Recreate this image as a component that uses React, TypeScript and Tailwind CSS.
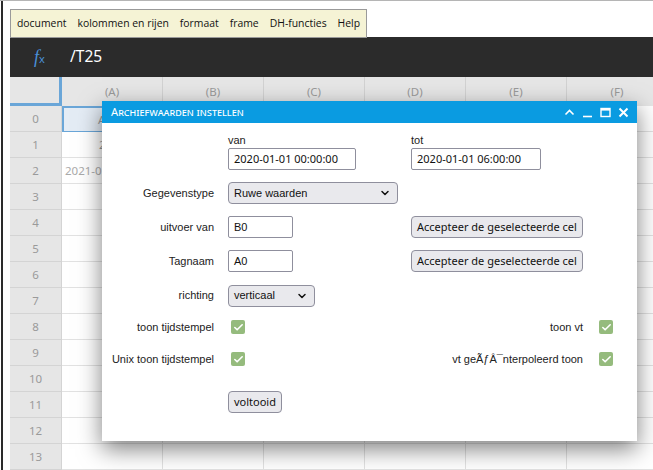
import { Check, ChevronDown } from "lucide-react";

const cols = ["(A)", "(B)", "(C)", "(D)", "(E)", "(F)"];
const rows = Array.from({ length: 14 }, (_, i) => i);
const menu = ["document", "kolommen en rijen", "formaat", "frame", "DH-functies", "Help"];

const sans = "font-['Liberation_Sans',Arial,sans-serif]";
const ui = "font-['Noto_Sans','Open_Sans',sans-serif]";
const open = "font-['Open_Sans','Noto_Sans',sans-serif]";

const Box = () => (
  <div className="w-[14px] h-[14px] rounded-[2px] bg-[#95bb7d] flex items-center justify-center">
    <Check className="w-[11px] h-[11px] text-white" strokeWidth={3.5} />
  </div>
);

const Input = ({ value, w }: { value: string; w: string }) => (
  <div className={`${w} h-[22px] border border-[#8f8f9d] rounded-[2px] bg-white flex items-center px-[5px] text-[11px] text-[#111]`}>
    {value}
  </div>
);

const Select = ({ value, w }: { value: string; w: string }) => (
  <div className={`${w} h-[22px] border border-[#8f8f9d] rounded-[4px] bg-[#e9e9ed] flex items-center justify-between pl-[5px] pr-[6px] text-[11px] text-[#111] ${sans}`}>
    <span>{value}</span>
    <ChevronDown className="w-[12px] h-[12px] text-[#111]" strokeWidth={3} />
  </div>
);

const Btn = ({ label }: { label: string }) => (
  <div className={`h-[22px] px-[5px] border border-[#8f8f9d] rounded-[4px] bg-[#e9e9ed] flex items-center text-[11px] text-[#111] ${ui}`}>
    {label}
  </div>
);

const Label = ({ text }: { text?: string }) => (
  <div className={`w-[126px] shrink-0 pr-[14px] text-right whitespace-nowrap text-[11px] text-[#222] ${sans}`}>{text}</div>
);

const Dialog = () => (
  <div className="absolute left-[102px] top-[100px] w-[535px] h-[340px] bg-white shadow-[0_8px_22px_rgba(0,0,0,0.5)] flex flex-col">
    <div className="h-[22px] bg-[#0a9be1] flex items-center justify-between pl-[9px] pr-[8px]">
      <span className={`text-white text-[11.2px] [font-variant:small-caps] ${ui}`}>Archiefwaarden instellen</span>
      <div className="flex items-center gap-[7px]">
        <svg width="11" height="11" viewBox="0 0 11 11"><path d="M1.5 7.5 L5.5 3.5 L9.5 7.5" stroke="white" strokeWidth="1.6" fill="none" /></svg>
        <svg width="11" height="11" viewBox="0 0 11 11"><path d="M1 9.5 H10" stroke="white" strokeWidth="1.6" /></svg>
        <svg width="11" height="11" viewBox="0 0 11 11"><rect x="1" y="1.5" width="9" height="8" stroke="white" strokeWidth="1.4" fill="none" /><path d="M1 2.5 H10" stroke="white" strokeWidth="2.2" /></svg>
        <svg width="11" height="11" viewBox="0 0 11 11"><path d="M1.5 1.5 L9.5 9.5 M9.5 1.5 L1.5 9.5" stroke="white" strokeWidth="2" /></svg>
      </div>
    </div>
    <div className="flex flex-col pt-[11px]">
      <div className="flex">
        <Label />
        <div className="w-[183px] flex flex-col">
          <span className={`h-[14px] text-[11px] leading-[12px] text-[#222] ${sans}`}>van</span>
          <Input value="2020-01-01 00:00:00" w={`w-[128px] ${ui}`} />
        </div>
        <div className="flex flex-col">
          <span className={`h-[14px] text-[11px] leading-[12px] text-[#222] ${sans}`}>tot</span>
          <Input value="2020-01-01 06:00:00" w={`w-[130px] ${ui}`} />
        </div>
      </div>
      <div className="flex items-center mt-[12px] h-[22px]">
        <Label text="Gegevenstype" />
        <Select value="Ruwe waarden" w="w-[170px]" />
      </div>
      <div className="flex items-center mt-[12px] h-[22px]">
        <Label text="uitvoer van" />
        <div className="w-[183px]"><Input value="B0" w={`w-[65px] ${sans}`} /></div>
        <Btn label="Accepteer de geselecteerde cel" />
      </div>
      <div className="flex items-center mt-[12px] h-[22px]">
        <Label text="Tagnaam" />
        <div className="w-[183px]"><Input value="A0" w={`w-[65px] ${sans}`} /></div>
        <Btn label="Accepteer de geselecteerde cel" />
      </div>
      <div className="flex items-center mt-[13px] h-[21px]">
        <Label text="richting" />
        <Select value="verticaal" w="w-[87px]" />
      </div>
      <div className="flex items-center mt-[10px] h-[22px]">
        <Label text="toon tijdstempel" />
        <div className="w-[183px] pl-[3px]"><Box /></div>
        <div className={`w-[172px] text-right whitespace-nowrap text-[11px] text-[#222] ${sans}`}>toon vt</div>
        <div className="pl-[16px]"><Box /></div>
      </div>
      <div className="flex items-center mt-[10px] h-[22px]">
        <Label text="Unix toon tijdstempel" />
        <div className="w-[183px] pl-[3px]"><Box /></div>
        <div className={`w-[172px] text-right whitespace-nowrap text-[11px] text-[#222] ${sans}`}>vt geÃƒÂ¯nterpoleerd toon</div>
        <div className="pl-[16px]"><Box /></div>
      </div>
      <div className="flex items-center mt-[21px] h-[22px]">
        <Label />
        <Btn label="voltooid" />
      </div>
    </div>
  </div>
);

export default function App() {
  return (
    <div className="w-[653px] h-[470px] overflow-hidden bg-white border-t border-[#b5b5b5] relative">
      <div className="ml-px h-full border-l-2 border-[#2a2a2a] pl-[7px] pt-[8px] flex flex-col">
        <div className={`self-start h-[29px] bg-[#f5f3d5] border border-[#9a9a9a] flex items-center px-[6px] gap-[11px] text-[10.4px] text-[#111] ${open} relative z-10`}>
          {menu.map((m) => (
            <span key={m}>{m}</span>
          ))}
        </div>
        <div className="h-[41px] -mt-px bg-[#2b2b2b] flex items-center">
          <span className="w-[60px] pl-[24px] text-[#4a90d9] font-['Liberation_Serif',serif] italic text-[18px] leading-none">
            f<span className={`text-[11px] not-italic ${ui}`}>x</span>
          </span>
          <span className={`text-white text-[15.5px] ${ui}`}>/T25</span>
        </div>
        <div className={`grid grid-cols-[52px_repeat(6,101px)] ${ui} text-[11.5px]`}>
          <div className="h-[29px] bg-[#e6e6e6] border-r-[3px] border-b-[3px] border-[#6aa6d8]" />
          {cols.map((c) => (
            <div key={c} className="h-[29px] bg-[#e6e6e6] border-r border-[#d2d2d2] flex items-center justify-center text-[#9a9a9a]">
              {c}
            </div>
          ))}
          {rows.map((r) => (
            <div key={r} className="contents">
              <div className="h-[26px] bg-[#e6e6e6] border-r border-b border-[#d4d4d4] flex items-center justify-center text-[#9a9a9a]">
                {r}
              </div>
              {cols.map((c, ci) => (
                <div
                  key={c}
                  className={`h-[26px] border-r border-b flex items-center overflow-hidden whitespace-nowrap ${
                    r === 0 && ci === 0 ? "bg-[#e4ecf5] border-2 border-[#6aa6d8]" : "border-[#e2e2e2]"
                  }`}
                >
                  {ci === 0 && r === 0 && <span className="pl-[34px] text-[#999]">A0</span>}
                  {ci === 0 && r === 1 && <span className="pl-[37px] text-[#999]">2020-01-01</span>}
                  {ci === 0 && r === 2 && <span className="pl-[3px] text-[#aaa]">2021-01-01 00:00:00</span>}
                </div>
              ))}
            </div>
          ))}
        </div>
      </div>
      <Dialog />
    </div>
  );
}
